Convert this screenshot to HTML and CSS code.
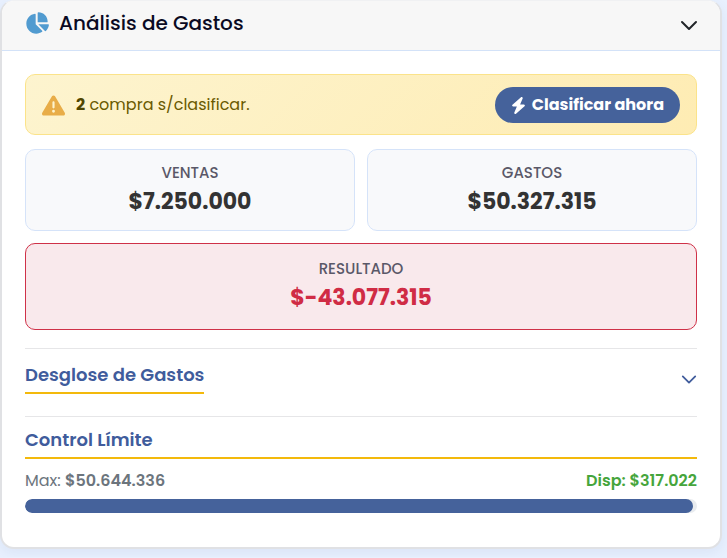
FILE: index.html
```html
<!DOCTYPE html>
<html lang="es">
  <head>
    <meta charset="UTF-8" />
    <meta name="viewport" content="width=device-width, initial-scale=1.0" />
    <title>Análisis de Gastos</title>
    <link rel="stylesheet" href="styles.css">
  </head>

  <body>
    <section class="card">
      <button class="card-header" type="button" aria-expanded="true">
        <svg class="icon-pie" viewBox="0 0 576 512" aria-hidden="true">
          <path d="M304 240V16.6c0-9 7-16.6 16-16.6C443.7 0 544 100.3 544 224c0 9-7.6 16-16.6 16H304zM32 272C32 150.7 122.1 50.3 239 34.3c9.2-1.3 17 6.1 17 15.4V288L412.5 444.5c6.7 6.7 6.2 17.7-1.5 23.1C371.8 495.6 323.8 512 272 512C139.5 512 32 404.6 32 272zm526.4 16c9.3 0 16.6 7.8 15.4 17c-7.7 55.9-34.6 105.6-73.9 142.3c-6 5.6-15.4 5.2-21.2-.7L320 288H558.4z" />
        </svg>
        <span class="card-title">Análisis de Gastos</span>
        <svg class="chevron" viewBox="0 0 18 18" aria-hidden="true">
          <path d="M2 5l7 7 7-7" />
        </svg>
      </button>

      <div class="card-body">
        <div class="alert">
          <svg class="icon-warning" viewBox="0 0 512 512" aria-hidden="true">
            <path d="M256 32c14.2 0 27.3 7.5 34.5 19.8l216 368c7.3 12.4 7.3 27.7 .2 40.1S486.3 480 472 480H40c-14.3 0-27.6-7.7-34.7-20.1s-7-27.8 .2-40.1l216-368C228.7 39.5 241.8 32 256 32zm0 128c-13.3 0-24 10.7-24 24V296c0 13.3 10.7 24 24 24s24-10.7 24-24V184c0-13.3-10.7-24-24-24zm32 224a32 32 0 1 0 -64 0 32 32 0 1 0 64 0z" />
          </svg>
          <p class="alert-text"><strong>2</strong> compra s/clasificar.</p>
          <button class="btn-classify" type="button">
            <svg class="icon-bolt" viewBox="0 0 448 512" aria-hidden="true">
              <path d="M349.4 44.6c5.9-13.7 1.5-29.7-10.6-38.5s-28.6-8-39.9 1.8l-256 224c-10 8.8-13.6 22.9-8.9 35.3S50.7 288 64 288H175.5L98.6 467.4c-5.9 13.7-1.5 29.7 10.6 38.5s28.6 8 39.9-1.8l256-224c10-8.8 13.6-22.9 8.9-35.3s-16.6-20.7-30-20.7H272.5L349.4 44.6z" />
            </svg>
            Clasificar ahora
          </button>
        </div>

        <div class="stats">
          <div class="stat">
            <p class="stat-label">Ventas</p>
            <p class="stat-value">$7.250.000</p>
          </div>
          <div class="stat">
            <p class="stat-label">Gastos</p>
            <p class="stat-value">$50.327.315</p>
          </div>
          <div class="stat stat-result">
            <p class="stat-label">Resultado</p>
            <p class="stat-value">$-43.077.315</p>
          </div>
        </div>

        <button class="breakdown" type="button" aria-expanded="false">
          <span class="section-title">Desglose de Gastos</span>
          <svg class="chevron chevron-small" viewBox="0 0 18 18" aria-hidden="true">
            <path d="M2 5l7 7 7-7" />
          </svg>
        </button>

        <div class="limit">
          <h3 class="section-title">Control Límite</h3>
          <div class="limit-row">
            <span>Max: <strong>$50.644.336</strong></span>
            <strong class="available">Disp: $317.022</strong>
          </div>
          <div class="progress" role="progressbar" aria-label="Control Límite" aria-valuenow="50327315" aria-valuemin="0" aria-valuemax="50644336">
            <div class="progress-bar" style="width: 99.37%"></div>
          </div>
        </div>
      </div>
    </section>
  </body>
</html>
```

FILE: styles.css
```css
* {
  margin: 0;
  padding: 0;
  box-sizing: border-box;
}
body {
  padding: 0 5px 8px 0;
  background-color: #e8f0fe;
  font-family: Poppins, Inter, sans-serif;
  font-size: 16px;
  line-height: 24px;
}
button {
  font: inherit;
  border: none;
  background: none;
  cursor: pointer;
}

.card {
  overflow: hidden;
  border: 2px solid #e0e1e4;
  border-top: 1px solid #f0f1f3;
  border-radius: 14px;
  background-color: #ffffff;
  box-shadow: 0 4px 12px rgba(69, 98, 155, 0.08);
}
.card-header {
  width: 100%;
  height: 50px;
  display: flex;
  align-items: center;
  padding: 0 22px 5px 23px;
  border-bottom: 1px solid #d3e2f8;
  background-color: #f7f7f7;
  color: #0a0a23;
}
.icon-pie {
  width: 24px;
  height: 22px;
  margin-right: 10px;
  fill: #519bd0;
}
.card-title {
  font-size: 20px;
  font-weight: 500;
}
.chevron {
  width: 18px;
  height: 18px;
  margin-left: auto;
  margin-top: 5px;
  fill: none;
  stroke: #212529;
  stroke-width: 2;
  stroke-linecap: round;
  stroke-linejoin: round;
}
.card-body {
  padding: 23px 23px 34px 23px;
}

.alert {
  display: flex;
  align-items: center;
  padding: 12px 16px 11px;
  border: 1px solid #fbe38a;
  border-radius: 10px;
  background: linear-gradient(135deg, #fdf4cf, #feecb3);
  color: #6a5a00;
}
.icon-warning {
  width: 23px;
  height: 23px;
  margin-right: 11px;
  fill: #e8ad48;
}
.alert-text strong {
  color: #4f4500;
}
.btn-classify {
  height: 36px;
  display: flex;
  align-items: center;
  gap: 6px;
  margin-left: auto;
  padding: 0 16px;
  border-radius: 18px;
  background-color: #45629b;
  color: #ffffff;
  font-weight: 700;
}
.icon-bolt {
  width: 15px;
  height: 17px;
  fill: #ffffff;
}

.stats {
  display: grid;
  grid-template-columns: 1fr 1fr;
  gap: 12px;
  margin-top: 14px;
}
.stat {
  padding: 11px 16px;
  border: 1px solid #d5e3f9;
  border-radius: 10px;
  background-color: #f8f9fb;
  text-align: center;
}
.stat-label {
  color: #5a5868;
  font-size: 15px;
  font-weight: 500;
  text-transform: uppercase;
}
.stat-value {
  color: #333333;
  font-size: 22px;
  font-weight: 700;
  line-height: 34px;
}
.stat-result {
  grid-column: 1 / -1;
  padding: 13px 16px 14px;
  border-color: #cf3148;
  background-color: #f9e9ec;
}
.stat-result .stat-value {
  color: #d02c45;
}

.section-title {
  padding-bottom: 3px;
  border-bottom: 2px solid #f3b90c;
  color: #405c9c;
  font-size: 18px;
  font-weight: 600;
  line-height: 28px;
}
.breakdown {
  width: 100%;
  display: flex;
  align-items: center;
  justify-content: space-between;
  margin-top: 18px;
  padding: 12px 0 22px;
  border-top: 1px solid #e6e6e8;
}
.chevron-small {
  width: 16px;
  height: 16px;
  stroke: #405c9c;
}
.limit {
  padding-top: 9px;
  border-top: 1px solid #e6e6e8;
}
.limit-row {
  display: flex;
  justify-content: space-between;
  margin: 10px 0 6px;
  color: #6c757d;
}
.limit-row strong {
  font-weight: 600;
}
.limit-row .available {
  color: #46a53c;
}
.progress {
  height: 14px;
  overflow: hidden;
  border-radius: 7px;
  background-color: #e9ecef;
}
.progress-bar {
  height: 100%;
  border-radius: 7px;
  background-color: #45629b;
}
```
